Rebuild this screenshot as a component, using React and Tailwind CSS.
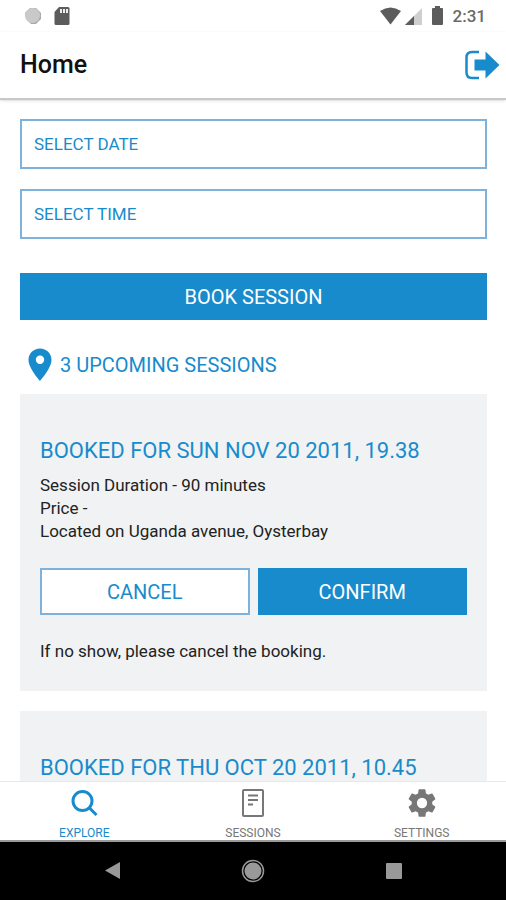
const sessions = [
  { id: 1, when: 'SUN NOV 20 2011, 19.38', open: true },
  { id: 2, when: 'THU OCT 20 2011, 10.45', open: false },
];

function StatusBar() {
  return (
    <div className="flex h-8 shrink-0 items-center justify-between pl-6 pr-5">
      <div className="flex items-center gap-3">
        <svg width="18" height="18" viewBox="0 0 18 18" aria-hidden="true">
          <path d="M6 1h6l5 5v6l-5 5H7l-5-5-1-6z" fill="#aaa" />
          <circle cx="8.5" cy="8.5" r="7.5" fill="#c9c9c9" />
        </svg>
        <svg width="16" height="18" viewBox="0 0 16 18" aria-hidden="true">
          <path d="M5 0h9q1.500 0 1.500 1.500v15q0 1.500-1.500 1.500H2Q.5 18 .5 16.500V5z" fill="#5c5c5c" />
          <path d="M6 2h2v4H6zM9 2h2v4H9zM12 2h2v4h-2z" fill="#eee" />
        </svg>
      </div>
      <div className="flex items-center">
        <svg width="74" height="20" viewBox="0 0 74 20" aria-hidden="true">
          <path d="M1 5Q11.500-2 22 5L11.500 18.500z" fill="#5c5c5c" />
          <path d="M43 2v17H26z" fill="#cfcfcf" />
          <path d="M35 10v9h-9z" fill="#5c5c5c" />
          <path d="M56 2V0h5v2h2q1 0 1 1v15q0 1-1 1h-9q-1 0-1-1V3q0-1 1-1z" fill="#5c5c5c" />
        </svg>
        <span className="text-[17px] font-medium leading-5 text-[#6a6a6a]">2:31</span>
      </div>
    </div>
  );
}

function Header() {
  return (
    <header className="relative z-10 flex h-[68px] shrink-0 items-center justify-between border-b-2 border-[#c8c8c8] bg-white pl-5 pr-1.5 shadow-sm">
      <h1 className="text-[25px] font-medium leading-8 text-[#111]">Home</h1>
      <button type="button" aria-label="Log out" className="text-[#188bcc]">
        <svg width="36" height="30" viewBox="0 0 36 30" aria-hidden="true">
          <path d="M15 2H8Q2.500 2 2.500 7.500v15Q2.500 28 8 28h7" fill="none" stroke="currentColor" strokeWidth="2.5" />
          <path d="M10.500 9.500h11V1.500L35.500 15 21.500 28.500V20.500h-11z" fill="currentColor" />
        </svg>
      </button>
    </header>
  );
}

function SessionCard({ when, open }) {
  return (
    <article className="bg-[#f0f2f3] px-5 pb-7 pt-[42px]">
      <h3 className="text-[22px] leading-[30px] text-[#188bcc]">BOOKED FOR {when}</h3>
      {open && (
        <>
          <div className="mt-2 text-[17px] leading-[23px] text-[#222]">
            <p>Session Duration - 90 minutes</p>
            <p>Price -</p>
            <p>Located on Uganda avenue, Oysterbay</p>
          </div>
          <div className="mt-[25px] flex gap-2 text-[20px]">
            <button type="button" className="h-[47px] flex-1 border-2 border-[#7db2dc] bg-white text-[#188bcc]">CANCEL</button>
            <button type="button" className="h-[47px] flex-1 border-2 border-[#188bcc] bg-[#188bcc] text-white">CONFIRM</button>
          </div>
          <p className="mt-[25px] text-[17px] leading-[23px] text-[#222]">If no show, please cancel the booking.</p>
        </>
      )}
    </article>
  );
}

function TabBar() {
  const tab = 'flex flex-1 flex-col items-center gap-2 pt-1.5 text-[12px] leading-[14px]';
  return (
    <nav className="flex h-[61px] shrink-0 border-b-2 border-t border-b-[#9a9a9a] border-t-[#e8e8e8] bg-white text-[#777]">
      <a href="#explore" aria-current="page" className={`${tab} text-[#188bcc]`}>
        <svg width="30" height="30" viewBox="0 0 30 30" fill="none" stroke="currentColor" strokeWidth="3" aria-hidden="true">
          <circle cx="13.5" cy="13" r="9.5" />
          <path d="M20 19.500L27.500 27" />
        </svg>
        EXPLORE
      </a>
      <a href="#sessions" className={tab}>
        <svg width="30" height="30" viewBox="0 0 30 30" fill="none" stroke="currentColor" strokeWidth="2" aria-hidden="true">
          <rect x="5" y="2" width="20" height="26" rx="1" />
          <path d="M10 7.500h10M10 12h10M10 16.500h5" />
        </svg>
        SESSIONS
      </a>
      <a href="#settings" className={tab}>
        <svg width="30" height="30" viewBox="1.500 1.500 21 21" fill="currentColor" aria-hidden="true">
          <path d="M19.140 12.940c.04-.3.06-.61.06-.94 0-.32-.02-.64-.07-.94l2.030-1.580a.49.49 0 0 0 .12-.61l-1.920-3.320a.488.488 0 0 0-.59-.22l-2.390.96c-.5-.38-1.030-.7-1.620-.94l-.36-2.540a.484.484 0 0 0-.48-.41h-3.840c-.24 0-.43.17-.47.41l-.36 2.540c-.59.24-1.130.57-1.620.94l-2.390-.96c-.22-.08-.47 0-.59.22L2.740 8.870c-.12.21-.08.47.12.61l2.030 1.580c-.05.3-.09.63-.09.94s.02.64.07.94l-2.030 1.580a.49.49 0 0 0-.12.61l1.920 3.320c.12.22.37.29.59.22l2.390-.96c.5.38 1.030.7 1.620.94l.36 2.540c.05.24.24.41.48.41h3.840c.24 0 .44-.17.47-.41l.36-2.540c.59-.24 1.130-.56 1.620-.94l2.390.96c.22.08.47 0 .59-.22l1.920-3.320c.12-.22.07-.47-.12-.61zM12 15.600A3.600 3.600 0 1 1 12 8.400a3.600 3.600 0 0 1 0 7.200z" />
        </svg>
        SETTINGS
      </a>
    </nav>
  );
}

function SystemNav() {
  return (
    <div className="grid h-[58px] shrink-0 grid-cols-3 items-center bg-black px-[42px]">
      <button type="button" aria-label="Back" className="justify-self-center">
        <svg width="16" height="18" viewBox="0 0 16 18" aria-hidden="true"><path d="M16 0v17L1 8.500z" fill="#999" /></svg>
      </button>
      <button type="button" aria-label="Home screen" className="justify-self-center">
        <svg width="24" height="24" viewBox="0 0 24 24" aria-hidden="true">
          <circle cx="12" cy="12" r="10.500" fill="none" stroke="#999" strokeWidth="1.500" />
          <circle cx="12" cy="12" r="8.500" fill="#999" />
        </svg>
      </button>
      <button type="button" aria-label="Recent apps" className="justify-self-center">
        <svg width="16" height="16" viewBox="0 0 16 16" aria-hidden="true"><rect width="16" height="16" rx="1" fill="#999" /></svg>
      </button>
    </div>
  );
}

export default function App() {
  const field = 'h-[50px] w-full border-2 border-[#7db2dc] bg-white px-3 text-[17px] text-[#188bcc] placeholder:text-[#188bcc] placeholder:opacity-100';
  return (
    <div className="flex h-screen flex-col bg-white font-['Roboto',sans-serif]">
      <StatusBar />
      <Header />
      <main className="min-h-0 flex-1 overflow-hidden pl-5 pr-[19px] pt-[19px]">
        <form>
          <div className="flex flex-col gap-5">
            <input type="text" aria-label="Select date" placeholder="SELECT DATE" className={field} />
            <input type="text" aria-label="Select time" placeholder="SELECT TIME" className={field} />
          </div>
          <button type="button" className="mt-[34px] h-[47px] w-full bg-[#188bcc] text-[20px] text-white">BOOK SESSION</button>
        </form>
        <h2 className="mt-7 flex h-[34px] items-center gap-2 pl-2 text-[20px] text-[#188bcc]">
          <svg width="24" height="34" viewBox="0 0 24 34" fill="currentColor" aria-hidden="true">
            <path fillRule="evenodd" d="M12 .5C5.500.5.500 5.500.500 11.800.500 20.500 12 33 12 33s11.500-12.500 11.500-21.200C23.500 5.500 18.500.5 12 .5zm0 15.500a4.200 4.200 0 1 1 0-8.400 4.200 4.200 0 0 1 0 8.400z" />
          </svg>
          3 UPCOMING SESSIONS
        </h2>
        <div className="mt-3 flex flex-col gap-5">
          {sessions.map((s) => (
            <SessionCard key={s.id} when={s.when} open={s.open} />
          ))}
        </div>
      </main>
      <TabBar />
      <SystemNav />
    </div>
  );
}
